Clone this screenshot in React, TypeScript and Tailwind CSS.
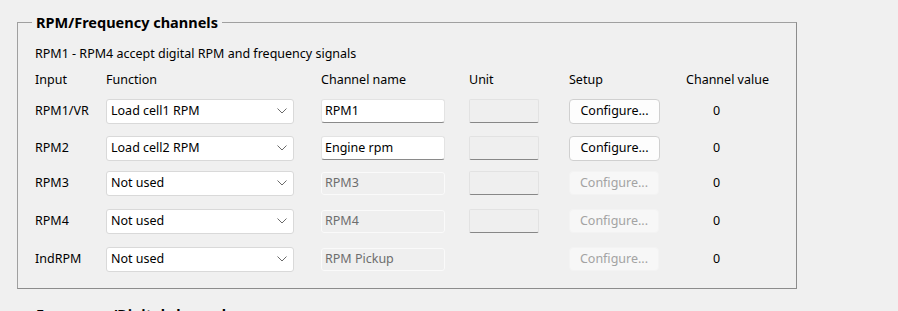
interface Channel {
	input: string;
	func: string;
	name: string;
	enabled: boolean;
	hasUnit: boolean;
	value: string;
	gap: string;
}

const channels: Channel[] = [
	{ input: "RPM1/VR", func: "Load cell1 RPM", name: "RPM1", enabled: true, hasUnit: true, value: "0", gap: "mt-[10px]" },
	{ input: "RPM2", func: "Load cell2 RPM", name: "Engine rpm", enabled: true, hasUnit: true, value: "0", gap: "mt-[11px]" },
	{ input: "RPM3", func: "Not used", name: "RPM3", enabled: false, hasUnit: true, value: "0", gap: "mt-[9px]" },
	{ input: "RPM4", func: "Not used", name: "RPM4", enabled: false, hasUnit: true, value: "0", gap: "mt-[12px]" },
	{ input: "IndRPM", func: "Not used", name: "RPM Pickup", enabled: false, hasUnit: false, value: "0", gap: "mt-[12px]" },
];

const cols = "grid grid-cols-[71px_215px_148px_100px_117px_auto] items-center";

function ComboBox({ value }: { value: string }) {
	return (
		<div className="w-[188px] h-[25px] bg-white border border-[#d9d9d9] rounded-[3px] flex items-center justify-between pl-[4px] pr-[6px]">
			<span>{value}</span>
			<svg width="10" height="6" viewBox="0 0 10 6" className="text-[#6a6a6a]">
				<polyline points="0.5,0.5 5,5 9.5,0.5" fill="none" stroke="currentColor" strokeWidth="1" />
			</svg>
		</div>
	);
}

function TextBox({ value, enabled }: { value: string; enabled: boolean }) {
	if (enabled) {
		return (
			<div className="w-[124px] h-[24px] bg-white border border-[#e3e3e3] border-b-[#8a8a8a] rounded-[3px] flex items-center px-[3px]">
				{value}
			</div>
		);
	}
	return (
		<div className="w-[124px] h-[23px] bg-[#efefef] border border-[#fafafa] rounded-[3px] flex items-center px-[3px] text-[#6d6d6d]">
			{value}
		</div>
	);
}

function UnitBox() {
	return <div className="w-[70px] h-[24px] bg-[#efefef] border border-[#e2e2e2] border-b-[#878787] rounded-[2px]" />;
}

function ConfigureButton({ enabled }: { enabled: boolean }) {
	return enabled ? (
		<button className="w-[91px] h-[25px] bg-[#fdfdfd] border border-[#d0d0d0] rounded-[4px] text-black">
			Configure...
		</button>
	) : (
		<button className="w-[90px] h-[24px] bg-[#f7f7f7] border border-[#f3f3f3] rounded-[4px] text-[#a3a3a3]">
			Configure...
		</button>
	);
}

export default function App() {
	return (
		<div className="w-[898px] h-[311px] overflow-hidden bg-[#f0f0f0] text-black text-[12.5px] leading-[16px] font-['Noto_Sans',sans-serif]">
			<fieldset className="ml-[17px] mt-[14px] w-[780px] border border-[#a0a0a0] border-r-[#8c8c8c] border-b-[#8c8c8c] pl-[17px] pt-[16px] pb-[16px]">
				<legend className="ml-[-3px] px-[4px] font-bold text-[14.5px]">RPM/Frequency channels</legend>

				<div>RPM1 - RPM4 accept digital RPM and frequency signals</div>

				<div className={`${cols} mt-[10px]`}>
					<span>Input</span>
					<span>Function</span>
					<span>Channel name</span>
					<span>Unit</span>
					<span>Setup</span>
					<span>Channel value</span>
				</div>

				{channels.map((ch) => (
					<div key={ch.input} className={`${cols} h-[26px] ${ch.gap}`}>
						<span>{ch.input}</span>
						<ComboBox value={ch.func} />
						<TextBox value={ch.name} enabled={ch.enabled} />
						<div>{ch.hasUnit && <UnitBox />}</div>
						<ConfigureButton enabled={ch.enabled} />
						<span className="pl-[27px]">{ch.value}</span>
					</div>
				))}
			</fieldset>

			<fieldset className="ml-[17px] mt-[17px] w-[780px] border border-[#a0a0a0] pl-[17px] pt-[15px]">
				<legend className="ml-[-3px] px-[4px] font-bold text-[14.5px]">Frequency/Digital channels</legend>
				<div className="h-[40px]" />
			</fieldset>
		</div>
	);
}
